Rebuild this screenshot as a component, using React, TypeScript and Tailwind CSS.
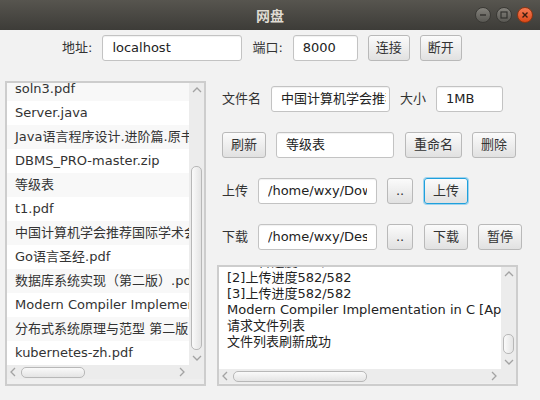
import React from "react";

const FONT = "font-['DejaVu_Sans','Noto_Sans_CJK_SC',sans-serif]";

const FILES = [
  "soln3.pdf",
  "Server.java",
  "Java语言程序设计.进阶篇.原书第10版.pdf",
  "DBMS_PRO-master.zip",
  "等级表",
  "t1.pdf",
  "中国计算机学会推荐国际学术会议和期刊目录.pdf",
  "Go语言圣经.pdf",
  "数据库系统实现（第二版）.pdf",
  "Modern Compiler Implementation in C [Appel 1998-07-28].pdf",
  "分布式系统原理与范型 第二版.pdf",
  "kubernetes-zh.pdf",
];

const LOG = [
  "[1]上传进度582/582",
  "[2]上传进度582/582",
  "[3]上传进度582/582",
  "Modern Compiler Implementation in C [Appel 1998-07-28].pdf",
  "请求文件列表",
  "文件列表刷新成功",
];

function Chevron({ dir }: { dir: "up" | "down" | "left" | "right" }) {
  const pts = {
    up: "1,6 5,2 9,6",
    down: "1,2 5,6 9,2",
    left: "6,1 2,5 6,9",
    right: "2,1 6,5 2,9",
  }[dir];
  const vertical = dir === "up" || dir === "down";
  return (
    <svg
      width={vertical ? 10 : 8}
      height={vertical ? 8 : 10}
      viewBox={vertical ? "0 0 10 8" : "0 0 8 10"}
    >
      <polyline points={pts} fill="none" stroke="#a3a3a3" strokeWidth="1.3" />
    </svg>
  );
}

function Button({ label, w, focused }: { label: string; w: string; focused?: boolean }) {
  return (
    <div
      className={`${w} h-[26px] shrink-0 flex items-center justify-center rounded-[3px] border text-[13px] text-[#333] bg-gradient-to-b from-[#fbfbfb] to-[#e1e1e1] ${
        focused ? "border-[#1fa0dc] ring-1 ring-[#9fd3ee]" : "border-[#b9b9b9]"
      }`}
    >
      {label}
    </div>
  );
}

function Field({ value, w, pr = "pr-[9px]" }: { value: string; w: string; pr?: string }) {
  return (
    <div
      className={`${w} h-[26px] shrink-0 flex items-center pl-[9px] ${pr} rounded-[3px] border border-[#c3c3c3] bg-white shadow-[inset_0_1px_1px_rgba(0,0,0,0.06)]`}
    >
      <div className="overflow-hidden whitespace-nowrap text-[13px] text-[#222]">{value}</div>
    </div>
  );
}

function Label({ text }: { text: string }) {
  return <span className="shrink-0 text-[13px] text-[#333]">{text}</span>;
}

function HScroll({ thumbW, thumbMl }: { thumbW: string; thumbMl: string }) {
  return (
    <div className="flex-1 h-[14px] flex items-center bg-[#ececec]">
      <div className="w-[12px] flex justify-center">
        <Chevron dir="left" />
      </div>
      <div className="flex-1 h-full flex items-center">
        <div
          className={`${thumbW} ${thumbMl} h-[11px] rounded-[5px] border border-[#b8b8b8] bg-gradient-to-b from-[#fafafa] to-[#e4e4e4]`}
        />
      </div>
      <div className="w-[14px] flex justify-center">
        <Chevron dir="right" />
      </div>
    </div>
  );
}

function VScroll({ thumbH, thumbMt }: { thumbH: string; thumbMt: string }) {
  return (
    <div className="w-[15px] flex flex-col items-center bg-[#ececec]">
      <div className="h-[14px] flex items-center">
        <Chevron dir="up" />
      </div>
      <div className="flex-1 w-full flex flex-col items-center">
        <div
          className={`${thumbH} ${thumbMt} w-[11px] rounded-[5px] border border-[#b8b8b8] bg-gradient-to-r from-[#fafafa] to-[#e4e4e4]`}
        />
      </div>
      <div className="h-[14px] flex items-center">
        <Chevron dir="down" />
      </div>
    </div>
  );
}

function TitleBar() {
  return (
    <div className="h-[30px] relative flex items-center justify-center bg-gradient-to-b from-[#57554f] to-[#3d3c38]">
      <span className="text-[14px] font-bold text-[#dfdbd2] font-['Noto_Sans_CJK_SC',sans-serif]">
        网盘
      </span>
      <div className="absolute right-[7px] top-[7px] flex gap-[5px]">
        <div className="w-[16px] h-[16px] rounded-full flex items-center justify-center bg-gradient-to-b from-[#84827c] to-[#595853] border border-[#3a3935]">
          <svg width="8" height="8" viewBox="0 0 8 8">
            <line x1="1" y1="4" x2="7" y2="4" stroke="#33322f" strokeWidth="1.4" />
          </svg>
        </div>
        <div className="w-[16px] h-[16px] rounded-full flex items-center justify-center bg-gradient-to-b from-[#84827c] to-[#595853] border border-[#3a3935]">
          <svg width="8" height="8" viewBox="0 0 8 8">
            <rect x="1" y="1" width="6" height="6" fill="none" stroke="#33322f" strokeWidth="1.2" />
          </svg>
        </div>
        <div className="w-[16px] h-[16px] rounded-full flex items-center justify-center bg-gradient-to-b from-[#f57a52] to-[#dd4814] border border-[#8e3512]">
          <svg width="8" height="8" viewBox="0 0 8 8">
            <path d="M1.5 1.5 L6.5 6.5 M6.5 1.5 L1.5 6.5" stroke="#3a1d10" strokeWidth="1.4" />
          </svg>
        </div>
      </div>
    </div>
  );
}

export default function App() {
  return (
    <div className={`w-[540px] h-[400px] overflow-hidden bg-[#f2f2f2] ${FONT}`}>
      <TitleBar />

      {/* connection bar */}
      <div className="h-[40px] pt-[5px] pl-[62px] flex items-start gap-[10px]">
        <div className="h-[26px] flex items-center">
          <Label text="地址:" />
        </div>
        <Field value="localhost" w="w-[140px]" />
        <div className="h-[26px] flex items-center">
          <Label text="端口:" />
        </div>
        <Field value="8000" w="w-[65px]" />
        <Button label="连接" w="w-[42px]" />
        <Button label="断开" w="w-[42px]" />
      </div>

      <div className="mt-[11px] flex">
        {/* file list */}
        <div className="ml-[5px] w-[201px] h-[305px] border-2 border-[#cdcdcd] flex flex-col bg-[#efefef]">
          <div className="flex h-[282px]">
            <div className="w-[182px] overflow-hidden bg-white">
              <div className="-mt-[6px]">
                {FILES.map((f, i) => (
                  <div
                    key={f}
                    className={`h-[24px] pl-[8px] flex items-center whitespace-nowrap text-[13px] text-[#333] ${
                      i % 2 === 0 ? "bg-[#f8f8f8]" : "bg-white"
                    }`}
                  >
                    {f}
                  </div>
                ))}
              </div>
            </div>
            <VScroll thumbH="h-[184px]" thumbMt="mt-[69px]" />
          </div>
          <div className="flex">
            <HScroll thumbW="w-[64px]" thumbMl="ml-[2px]" />
            <div className="w-[15px] h-[14px] bg-[#ececec]" />
          </div>
        </div>

        {/* controls */}
        <div className="ml-[11px] w-[301px] flex flex-col">
          <div className="pt-[5px] pl-[5px] flex flex-col gap-[20px]">
            <div className="flex items-center gap-[10px]">
              <Label text="文件名" />
              <Field value="中国计算机学会推荐国际学术会议和期刊目录.pdf" w="w-[119px]" pr="pr-[3px]" />
              <Label text="大小" />
              <Field value="1MB" w="w-[67px]" />
            </div>
            <div className="flex items-center gap-[10px]">
              <Button label="刷新" w="w-[44px]" />
              <Field value="等级表" w="w-[118px]" />
              <div className="ml-[1px]">
                <Button label="重命名" w="w-[57px]" />
              </div>
              <Button label="删除" w="w-[44px]" />
            </div>
            <div className="flex items-center gap-[10px]">
              <Label text="上传" />
              <Field value="/home/wxy/Downloads/Modern Compiler.pdf" w="w-[119px]" />
              <Button label=".." w="w-[26px]" />
              <div className="ml-[1px]">
                <Button label="上传" w="w-[44px]" focused />
              </div>
            </div>
            <div className="flex items-center gap-[10px]">
              <Label text="下载" />
              <Field value="/home/wxy/Desktop" w="w-[119px]" />
              <Button label=".." w="w-[26px]" />
              <div className="ml-[1px]">
                <Button label="下载" w="w-[44px]" />
              </div>
              <Button label="暂停" w="w-[44px]" />
            </div>
          </div>

          {/* log */}
          <div className="mt-[15px] h-[121px] border-2 border-[#cdcdcd] flex flex-col bg-[#efefef]">
            <div className="flex h-[102px]">
              <div className="flex-1 overflow-hidden bg-white">
                <div className="-mt-[13px] pl-[8px]">
                  {LOG.map((l) => (
                    <div key={l} className="h-[16px] leading-[16px] whitespace-nowrap text-[13px] text-[#222]">
                      {l}
                    </div>
                  ))}
                </div>
              </div>
              <VScroll thumbH="h-[20px]" thumbMt="mt-[53px]" />
            </div>
            <div className="flex">
              <HScroll thumbW="w-[134px]" thumbMl="ml-[2px]" />
              <div className="w-[15px] h-[14px] bg-[#ececec]" />
            </div>
          </div>
        </div>
      </div>
    </div>
  );
}
